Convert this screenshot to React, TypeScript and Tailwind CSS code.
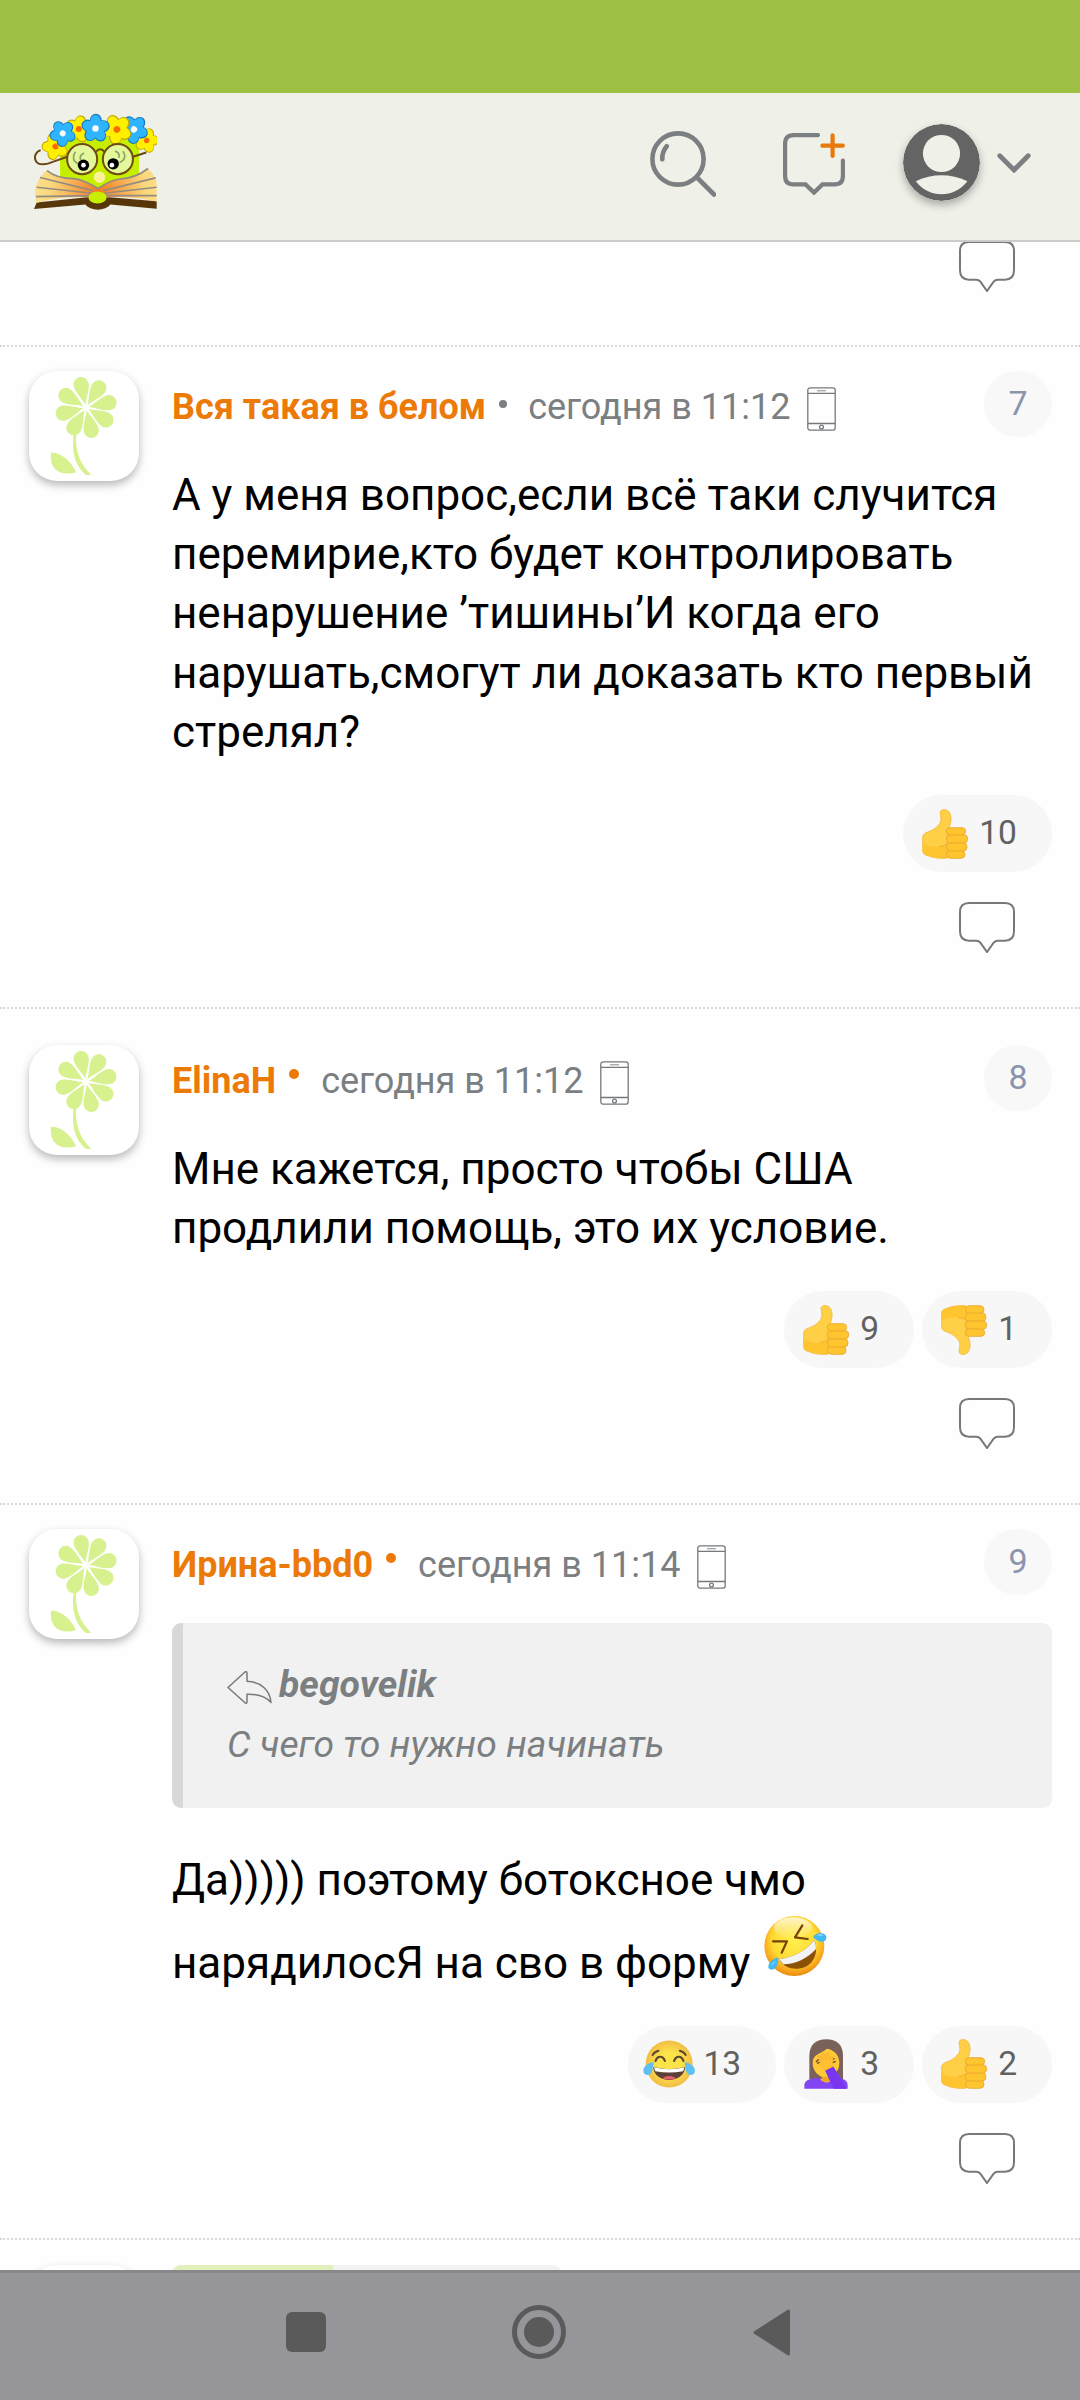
import type { ReactNode } from 'react';

type EmojiName = 'up' | 'down' | 'joy' | 'facepalm';

interface Reaction {
  emoji: EmojiName;
  count: number;
}

interface PostProps {
  author: string;
  online?: boolean;
  time: string;
  index: number;
  reactions: Reaction[];
  className?: string;
  children: ReactNode;
}

const PETALS = [-12, 33, 78, 122, 167, 211, 256, 301];

const YELLOW = { fill: '#fff000', edge: '#c4a800', core: '#ff6a00' };
const BLUE = { fill: '#2fb4ff', edge: '#1779bd', core: '#fff' };

interface LogoFlowerProps {
  x: number;
  y: number;
  fill: string;
  edge: string;
  core: string;
  turn?: number;
  size?: number;
}

const LogoFlower = ({ x, y, fill, edge, core, turn = 0, size = 1 }: LogoFlowerProps) => (
  <g transform={`translate(${x} ${y}) scale(${size}) rotate(${turn})`}>
    {[0, 72, 144, 216, 288].map((a) => (
      <ellipse key={`e${a}`} cx="1" cy="-24" rx="19" ry="22" fill={edge} transform={`rotate(${a})`} />
    ))}
    {[0, 72, 144, 216, 288].map((a) => (
      <ellipse key={a} cx="0" cy="-22" rx="16.5" ry="20.5" fill={fill} transform={`rotate(${a})`} />
    ))}
    <circle r="10" fill={core} />
  </g>
);

const Logo = () => (
  <svg className="w-[123px] h-[97px]" viewBox="104 98 368 290">
    <defs>
      <radialGradient id="page" gradientUnits="userSpaceOnUse" cx="296" cy="330" r="190">
        <stop offset="0" stopColor="#f47a1c" />
        <stop offset="0.35" stopColor="#f7a74c" />
        <stop offset="0.75" stopColor="#fbd87c" />
        <stop offset="1" stopColor="#fbe08a" />
      </radialGradient>
    </defs>
    <path d="M182 170H418V290L350 330H240L182 290Z" fill="#c6ef00" />
    <circle cx="300" cy="290" r="17" fill="#fdf29a" />
    <path d="M124 209C108 214 103 230 110 242C118 256 144 252 160 244L204 229" fill="none" stroke="#6b4713" strokeWidth="6" />
    <path d="M400 229L440 216" fill="none" stroke="#6b4713" strokeWidth="6" />
    <path d="M104 385L112 366L262 350H330L471 362V384L332 372C318 392 272 392 258 372Z" fill="#573709" />
    <path d="M143 270C165 288 190 294 222 294C250 296 276 312 296 324C314 312 334 298 358 296C396 294 420 284 445 264C458 278 470 292 471 306V363C420 350 370 348 322 350H268C215 348 160 352 110 367C106 340 106 325 112 312C118 294 130 278 143 270Z" fill="url(#page)" />
    <g fill="none" stroke="#948c82" strokeWidth="5">
      <path d="M143 270C165 288 190 294 222 294C250 296 276 312 296 324C314 312 334 298 358 296C396 294 420 284 445 264" />
      <path d="M122 291L280 330M112 320L278 338M110 348L272 345" />
      <path d="M468 292L312 330M471 320L314 338M471 345L320 345" />
    </g>
    <ellipse cx="294" cy="351" rx="27" ry="18" fill="#c8ef00" />
    <LogoFlower x={168} y={198} {...YELLOW} turn={-20} size={0.9} />
    <LogoFlower x={441} y={180} {...YELLOW} turn={16} size={0.82} />
    <LogoFlower x={238} y={146} {...YELLOW} turn={10} size={0.9} />
    <LogoFlower x={403} y={147} {...BLUE} turn={38} size={0.95} />
    <LogoFlower x={352} y={147} {...YELLOW} turn={-28} />
    <LogoFlower x={190} y={159} {...BLUE} turn={38} size={0.88} />
    <LogoFlower x={288} y={144} {...BLUE} size={0.95} />
    <g stroke="#6e4a12" strokeWidth="6" fill="#e4f79b">
      <path d="M290 214C296 204 308 204 314 214" fill="none" />
      <circle cx="248" cy="236" r="45" />
      <circle cx="355" cy="236" r="45" />
    </g>
    <g fill="none" stroke="#8fa36a" strokeWidth="5">
      <path d="M228 214C218 228 220 242 236 250M254 218C244 222 240 230 244 240" />
      <path d="M370 212C380 226 376 240 360 246M346 212C356 214 360 222 358 232" />
    </g>
    <circle cx="252" cy="254" r="17" fill="#000" />
    <circle cx="341" cy="250" r="17" fill="#000" />
    <circle cx="252" cy="254" r="7" fill="#fff" />
    <circle cx="337" cy="254" r="7" fill="#fff" />
  </svg>
);

const SearchIcon = () => (
  <svg className="w-[66px] h-[66px]" viewBox="0 0 66 66" fill="none" stroke="#7b7f82" strokeWidth="4.6" strokeLinecap="round">
    <circle cx="28" cy="28" r="25.6" />
    <path d="M47 46.5L64 63.5M12.3 28.3Q12 21 16.7 15.3" />
  </svg>
);

const NewTopicIcon = () => (
  <svg className="w-[62px] h-[62px]" viewBox="0 0 62 62" fill="none" strokeWidth="4.2" strokeLinecap="round">
    <path d="M35 2.1H10.5Q2.1 2.1 2.1 10.5V43Q2.1 51.4 10.5 51.4H22.5L31 59.6L39.5 51.4H51.5Q59.9 51.4 59.9 43V27.5" stroke="#7b7f82" />
    <path d="M39.4 12.7H59.8M49.6 2.4V23" stroke="#e87a0c" />
  </svg>
);

const UserIcon = () => (
  <svg className="w-[77px] h-[77px] rounded-full shadow-[0_4px_8px_rgba(0,0,0,0.3)]" viewBox="0 0 77 77">
    <circle cx="38.5" cy="38.5" r="38.5" fill="#646464" />
    <circle cx="38.5" cy="29.5" r="18.6" fill="#eff0e8" />
    <path d="M12.8 57.2Q38.5 45.5 64.4 57.2C51 74.5 26 74.5 12.8 57.2Z" fill="#eff0e8" />
  </svg>
);

const CommentIcon = ({ className = '' }: { className?: string }) => (
  <svg className={`w-14 h-[51px] ${className}`} viewBox="0 0 168 153" fill="none" stroke="#75797c" strokeWidth="6">
    <path d="M30 3H138Q165 3 165 30V88Q165 116 138 116H116Q109 116 104 122L84 150L64 122Q59 116 52 116H30Q3 116 3 88V30Q3 3 30 3Z" />
  </svg>
);

const PhoneIcon = () => (
  <svg className="w-[29px] h-11" viewBox="0 0 29 44" fill="none" stroke="#75797c" strokeWidth="1.3">
    <rect x="0.8" y="0.8" width="27.4" height="42.4" rx="2.5" />
    <path d="M1 6.4H28M1 36.5H28" />
    <path d="M10 3.7H19" strokeWidth="1.4" stroke="#a9acae" />
    <circle cx="14.5" cy="40" r="1.9" />
  </svg>
);

const ReplyIcon = () => (
  <svg className="w-[45px] h-[33px]" viewBox="0 0 45 33" fill="none" stroke="#75797c" strokeWidth="1.5" strokeLinejoin="round">
    <path d="M1 16.5L18 1Q20 0 20 2.5V10.2C34 11 43 19 44 31.5C39 25.5 31 23 20 23.2V30.5Q20 33 18 31.8Z" />
  </svg>
);

const FlowerAvatar = () => (
  <svg
    className="w-[110px] h-[110px] shrink-0 rounded-[28px] bg-white shadow-[0_4px_8px_rgba(0,0,0,0.28)]"
    viewBox="0 0 110 110"
    fill="#d7f18f"
  >
    {PETALS.map((a) => (
      <path key={a} transform={`translate(57 36.5) rotate(${a})`} d="M0-3C-2-9-7.6-17-7.6-23.500A7.600 7.600 0 0 1 7.600-23.500C7.600-17 2-9 0-3Z" />
    ))}
    <path d="M44.6 63C42.5 82 46 95 57 104H62.3C51 93 46 80 47.2 63Z" />
    <path d="M22 81.5C34 82 43 92 47 101.3C34 105 20 101 22 81.5Z" />
  </svg>
);

const Thumb = ({ className = '' }: { className?: string }) => (
  <svg className={`w-[46px] h-[50px] ${className}`} viewBox="0 0 138 150">
    <path
      d="M54 10C55-1 76-1 82 10C89 22 89 36 82 54L76 72V140L74 148C50 149 30 146 18 140Q2 137 2 126V84Q2 76 12 71C34 64 46 54 54 42C59 34 56 22 54 10Z"
      fill="#ffd046"
      stroke="#f3b63c"
      strokeWidth="2.5"
    />
    <path d="M3 100C20 118 56 116 74 108V147C50 148 30 145 18 139Q3 136 3 126Z" fill="#ffc531" />
    <g fill="#ffc52f" stroke="#eba52b" strokeWidth="2.5">
      <rect x="73" y="124" width="56" height="24" rx="12" />
      <rect x="73" y="101" width="62" height="25" rx="12" />
      <rect x="73" y="77" width="64" height="25" rx="12" />
      <rect x="73" y="56" width="58" height="22" rx="11" />
    </g>
    <path d="M52 113Q66 112 74 104" fill="none" stroke="#eba52b" strokeWidth="2.5" />
  </svg>
);

const Joy = () => (
  <svg className="w-[53px] h-12" viewBox="126 570 160 144">
    <defs>
      <radialGradient id="joy">
        <stop offset="0.5" stopColor="#fbe34a" />
        <stop offset="1" stopColor="#f2bd45" />
      </radialGradient>
    </defs>
    <circle cx="205" cy="642" r="71" fill="url(#joy)" />
    <g fill="none" stroke="#5b4630" strokeLinecap="round" strokeWidth="5.5">
      <path d="M155 615Q160 605 173 602M255 615Q250 605 237 602" />
      <path d="M164 633Q168 620 178 620Q188 620 192 633M220 633Q224 620 234 620Q244 620 248 633" strokeWidth="6.5" />
    </g>
    <path d="M157 651Q205 664 253 651C252 676 230 690 205 690S158 676 157 651Z" fill="#5b4136" />
    <path d="M159 652Q205 664 251 652L247 664Q205 672 163 664Z" fill="#fff" />
    <path d="M184 685Q205 672 226 685Q205 693 184 685Z" fill="#ee5f6c" />
    <path d="M158 636C134 640 124 656 128 668C133 680 152 676 154 662Z" fill="#5cc0f2" />
    <path d="M252 636C276 640 286 656 282 668C277 680 258 676 256 662Z" fill="#5cc0f2" />
  </svg>
);

const Facepalm = () => (
  <svg className="w-[44px] h-[50px]" viewBox="611 569 132 150">
    <path d="M627 690V620C627 585 648 570 678 570S728 585 728 620V690Z" fill="#7a6159" />
    <ellipse cx="677" cy="641" rx="40" ry="43" fill="#ffc936" />
    <path d="M636 640C636 612 672 612 684 592C690 606 712 604 717 630V612C708 586 692 582 677 582S640 592 634 618Z" fill="#7a6159" />
    <path d="M647 638L655 630M650 642L660 638M694 630L703 628M697 640L706 636" stroke="#5f4a38" strokeWidth="4" />
    <path d="M661 648L654 622Q656 616 661 621L666 633L664 614Q669 608 672 615L677 630L678 611Q683 606 686 613L688 632L693 622Q700 620 698 629L695 656L676 664Z" fill="#ffbf33" stroke="#f2a32a" strokeWidth="1.5" />
    <path d="M664 682H690V700H664Z" fill="#f0a62a" />
    <path d="M612 718V706C614 690 634 686 658 685C664 700 680 702 690 697L675 664L699 652L722 688C736 690 742 698 742 708V718Z" fill="#8445f2" />
    <path d="M675 664L699 652L722 688L738 718H700Z" fill="#7a36ee" />
  </svg>
);

const Rofl = () => (
  <svg className="inline-block w-[63px] h-[62px] ml-[14px] mt-[4px] mb-[1px] align-baseline" viewBox="491 189 189 186">
    <defs>
      <radialGradient id="rofl" cx="0.5" cy="0.4" r="0.62">
        <stop offset="0" stopColor="#fff04f" />
        <stop offset="0.6" stopColor="#fed932" />
        <stop offset="0.85" stopColor="#f7a51c" />
        <stop offset="1" stopColor="#df8409" />
      </radialGradient>
      <linearGradient id="shine" x1="0" y1="0" x2="0" y2="1">
        <stop offset="0" stopColor="#fff" stopOpacity="0.75" />
        <stop offset="1" stopColor="#fff" stopOpacity="0" />
      </linearGradient>
    </defs>
    <circle cx="582" cy="282" r="90" fill="url(#rofl)" />
    <ellipse cx="578" cy="228" rx="58" ry="32" fill="url(#shine)" />
    <path d="M606 220L584 256L622 261M518 268L560 268L544 302" fill="none" stroke="#75420a" strokeWidth="6.5" strokeLinejoin="round" strokeLinecap="round" />
    <path d="M537 322Q604 312 642 265C656 298 642 334 612 346C584 356 552 350 537 322Z" fill="#8b5206" />
    <path d="M537 322Q604 312 642 265Q648 280 647 291C620 320 586 336 549 337Z" fill="#f3f3f3" />
    <path d="M638 255C648 240 674 238 678 254C680 272 656 276 638 255Z" fill="#42b9f2" />
    <path d="M534 316C514 322 500 336 505 349C514 360 536 350 534 316Z" fill="#42b9f2" />
    <path d="M650 251Q662 243 670 250Z" fill="#b6e8ff" />
    <path d="M527 327Q514 334 512 342Z" fill="#b6e8ff" />
  </svg>
);

const emojis: Record<EmojiName, ReactNode> = {
  up: <Thumb />,
  down: <Thumb className="-scale-y-100" />,
  joy: <Joy />,
  facepalm: <Facepalm />,
};

const ReactionPill = ({ emoji, count }: Reaction) => (
  <button className="flex items-center h-[77px] pl-[14px] pr-[35px] rounded-full bg-[#f7f7f7]">
    <span className="flex justify-center w-14">{emojis[emoji]}</span>
    <span className="ml-[6px] pb-[2px] text-[33.6px] leading-none text-[#616161]">{count}</span>
  </button>
);

const Post = ({ author, online, time, index, reactions, className = 'pt-6', children }: PostProps) => (
  <article className={`flex gap-[33px] pl-[29px] pr-7 pb-[54px] border-b-2 border-dotted border-[#d9d9d9] ${className}`}>
    <FlowerAvatar />
    <div className="flex-1">
      <div className="flex items-center h-[72px] text-[36px] leading-none text-[#7b7f82]">
        <span className="font-bold text-[#ec7a08]">{author}</span>
        {online ? (
          <span className="w-[10px] h-[10px] ml-[13px] mb-[14px] mr-[22px] rounded-full bg-[#ec7a08]" />
        ) : (
          <span className="w-2 h-2 ml-[13px] mb-[6px] mr-[21px] rounded-full bg-[#7b7f82]" />
        )}
        <span>{time}</span>
        <span className="ml-[17px] mt-[4px]"><PhoneIcon /></span>
        <span className="flex items-center justify-center w-[68px] h-[66px] ml-auto mb-[6px] pb-[2px] rounded-full bg-[#f8f8f8] text-[34px] text-[#8b94ad]">
          {index}
        </span>
      </div>
      <div className="mt-[23px] text-[44px] leading-[59.2px] text-black">{children}</div>
      <div className="flex justify-end gap-2 mt-[33px]">
        {reactions.map((r) => (
          <ReactionPill key={r.emoji} {...r} />
        ))}
      </div>
      <div className="flex justify-end mt-[30px] pr-[37px]">
        <CommentIcon />
      </div>
    </div>
  </article>
);

const App = () => {
  return (
    <div className="flex flex-col w-[1080px] h-[2400px] overflow-hidden bg-[#fefefe] font-[Roboto,sans-serif]">
      <div className="h-[93px] shrink-0 bg-[#9ec045]" />

      <header className="flex items-start h-[149px] shrink-0 bg-[#eff0e8] border-b-2 border-[#cbccc9] pl-[34px] pt-[20px]">
        <Logo />
        <div className="ml-[493px] mt-[18px]"><SearchIcon /></div>
        <div className="ml-[67px] mt-[20px]"><NewTopicIcon /></div>
        <div className="ml-[58px] mt-[11px]"><UserIcon /></div>
        <svg className="w-[34px] h-5 ml-[17px] mt-[40px]" viewBox="0 0 34 20" fill="none" stroke="#7b7f82" strokeWidth="4.8" strokeLinecap="round">
          <path d="M2.8 2.8L17 17L31.2 2.8" />
        </svg>
      </header>

      <main className="flex-1 min-h-0 overflow-hidden">
        {/* tail of the previous post, scrolled under the header */}
        <div className="flex justify-end h-[105px] pr-[65px] border-b-2 border-dotted border-[#d9d9d9]">
          <CommentIcon className="-mt-[1px]" />
        </div>

        <Post author="Вся такая в белом" time="сегодня в 11:12" index={7} reactions={[{ emoji: 'up', count: 10 }]}>
          А у меня вопрос,если всё таки случится<br />
          перемирие,кто будет контролировать<br />
          ненарушение ’тишины’И когда его<br />
          нарушать,смогут ли доказать кто первый<br />
          стрелял?
        </Post>

        <Post
          author="ElinaH"
          online
          time="сегодня в 11:12"
          index={8}
          className="pt-9"
          reactions={[{ emoji: 'up', count: 9 }, { emoji: 'down', count: 1 }]}
        >
          Мне кажется, просто чтобы США<br />
          продлили помощь, это их условие.
        </Post>

        <Post
          author="Ирина-bbd0"
          online
          time="сегодня в 11:14"
          index={9}
          reactions={[{ emoji: 'joy', count: 13 }, { emoji: 'facepalm', count: 3 }, { emoji: 'up', count: 2 }]}
        >
          <blockquote className="h-[185px] -mt-px mb-[43px] pl-11 pt-8 border-l-[11px] border-[#d8d8d8] rounded-[9px] bg-[#f1f1f1] text-[37.3px] leading-[59.5px] italic text-[#7b7f82]">
            <div className="flex items-center">
              <span className="mt-[5px] mr-[7px]"><ReplyIcon /></span>
              <b>begovelik</b>
            </div>
            С чего то нужно начинать
          </blockquote>
          Да))))) поэтому ботоксное чмо<br />
          нарядилосЯ на сво в форму<Rofl />
        </Post>

        <div className="flex gap-[33px] pl-[29px] pt-[25px]">
          <FlowerAvatar />
          <div className="flex w-[390px] h-[60px] overflow-hidden rounded-[9px] bg-[#f2f2f2]">
            <div className="w-[161px] bg-[#e2f0bb]" />
          </div>
        </div>
      </main>

      <nav className="flex items-center h-[130px] shrink-0 border-t-[3px] border-[#88878c] bg-[#96959a] pl-[286px] pb-[9px]">
        <div className="w-10 h-10 rounded-[6px] bg-[#5a5a5a]" />
        <div className="flex items-center justify-center w-[54px] h-[54px] ml-[186px] rounded-full border-[5px] border-[#5a5a5a]">
          <div className="w-[30px] h-[30px] rounded-full bg-[#5a5a5a]" />
        </div>
        <svg className="w-[38px] h-[47px] ml-[187px]" viewBox="0 0 38 47" fill="#5a5a5a" stroke="#5a5a5a" strokeWidth="3" strokeLinejoin="round">
          <path d="M2 23.5L35.5 2V45Z" />
        </svg>
      </nav>
    </div>
  );
};

export default App;
